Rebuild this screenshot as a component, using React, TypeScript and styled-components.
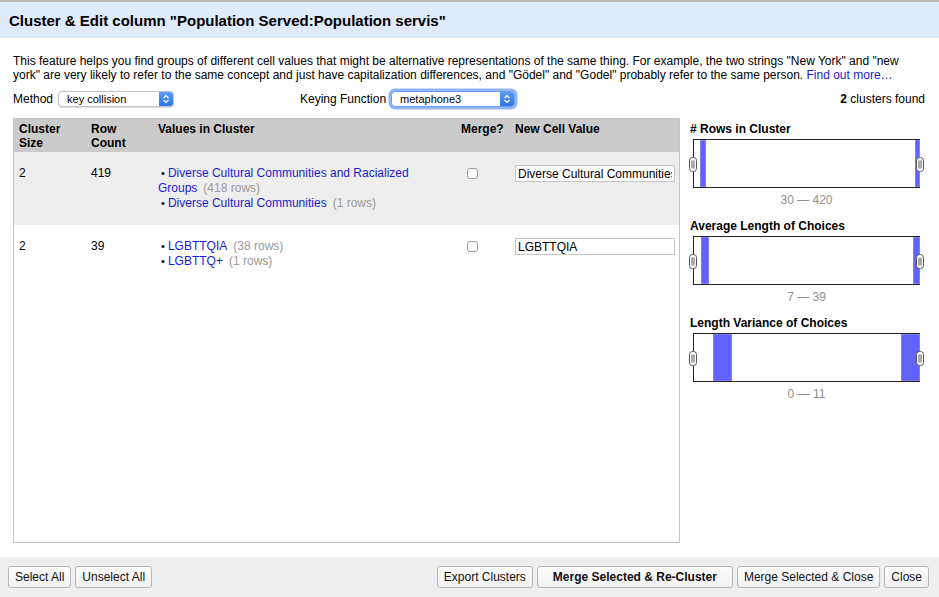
import React from 'react'
import styled, { createGlobalStyle } from 'styled-components'

type Choice = { value: string; rows: number }
type Cluster = { size: number; count: number; choices: Choice[]; newValue: string }
type Bar = { left: number; width: number }
type Histogram = { title: string; range: string; bars: Bar[] }

const clusters: Cluster[] = [
    {
        size: 2,
        count: 419,
        choices: [
            { value: 'Diverse Cultural Communities and Racialized Groups', rows: 418 },
            { value: 'Diverse Cultural Communities', rows: 1 },
        ],
        newValue: 'Diverse Cultural Communities and Racialized Groups',
    },
    {
        size: 2,
        count: 39,
        choices: [
            { value: 'LGBTTQIA', rows: 38 },
            { value: 'LGBTTQ+', rows: 1 },
        ],
        newValue: 'LGBTTQIA',
    },
]

const histograms: Histogram[] = [
    {
        title: '# Rows in Cluster',
        range: '30 \u2014 420',
        bars: [
            { left: 6, width: 6 },
            { left: 221, width: 5 },
        ],
    },
    {
        title: 'Average Length of Choices',
        range: '7 \u2014 39',
        bars: [
            { left: 7, width: 8 },
            { left: 219, width: 7 },
        ],
    },
    {
        title: 'Length Variance of Choices',
        range: '0 \u2014 11',
        bars: [
            { left: 19, width: 19 },
            { left: 207, width: 19 },
        ],
    },
]

const GlobalStyle = createGlobalStyle`
    html, body {
        margin: 0;
        padding: 0;
    }
    body {
        font-family: 'Liberation Sans', Arial, sans-serif;
        font-size: 12px;
        color: #000;
        background: #fff;
    }
`

const Stepper = () => (
    <svg width="8" height="10" viewBox="0 0 8 10">
        <path d="M1.5 4 L4 1.5 L6.5 4" fill="none" stroke="#fff" strokeWidth="1.2" />
        <path d="M1.5 6 L4 8.5 L6.5 6" fill="none" stroke="#fff" strokeWidth="1.2" />
    </svg>
)

const Handle = () => (
    <svg width="8" height="15" viewBox="0 0 8 15">
        <rect x="0.5" y="0.5" width="7" height="14" rx="3" fill="#fff" stroke="#555" />
        <line x1="3" y1="3.5" x2="3" y2="11.5" stroke="#555" />
        <line x1="5" y1="3.5" x2="5" y2="11.5" stroke="#555" />
    </svg>
)

const App = () => {
    return (
        <>
            <GlobalStyle />
            <Dialog>
                <Header>Cluster &amp; Edit column "Population Served:Population servis"</Header>
                <Body>
                    <Intro>
                        This feature helps you find groups of different cell values that might be
                        alternative representations of the same thing. For example, the two strings
                        "New York" and "new york" are very likely to refer to the same concept and
                        just have capitalization differences, and "Gödel" and "Godel" probably refer
                        to the same person. <Link>Find out more…</Link>
                    </Intro>
                    <Controls>
                        <Field>
                            <span>Method</span>
                            <Select width={116}>
                                <span>key collision</span>
                                <StepBtn>
                                    <Stepper />
                                </StepBtn>
                            </Select>
                        </Field>
                        <Field>
                            <span>Keying Function</span>
                            <Select width={124} focused>
                                <span>metaphone3</span>
                                <StepBtn>
                                    <Stepper />
                                </StepBtn>
                            </Select>
                        </Field>
                        <Found>
                            <b>2</b> clusters found
                        </Found>
                    </Controls>
                    <Main>
                        <TablePanel>
                            <HeadRow>
                                <HeadCell first narrow>Cluster Size</HeadCell>
                                <HeadCell narrow>Row Count</HeadCell>
                                <HeadCell>Values in Cluster</HeadCell>
                                <HeadCell>Merge?</HeadCell>
                                <HeadCell>New Cell Value</HeadCell>
                            </HeadRow>
                            {clusters.map((c, i) => (
                                <ClusterRow key={i} shaded={i % 2 === 0}>
                                    <Cell first>{c.size}</Cell>
                                    <Cell>{c.count}</Cell>
                                    <Values>
                                        {c.choices.map((ch, j) => (
                                            <Choice key={j}>
                                                <Bullet>• </Bullet>
                                                <Link>{ch.value}</Link>
                                                <RowCount>({ch.rows} rows)</RowCount>
                                            </Choice>
                                        ))}
                                    </Values>
                                    <Cell>
                                        <Check />
                                    </Cell>
                                    <Cell>
                                        <ValueInput defaultValue={c.newValue} />
                                    </Cell>
                                </ClusterRow>
                            ))}
                        </TablePanel>
                        <Facets>
                            {histograms.map((h, i) => (
                                <Facet key={i}>
                                    <FacetTitle>{h.title}</FacetTitle>
                                    <HistBox>
                                        {h.bars.map((b, j) => (
                                            <HistBar key={j} style={{ left: b.left, width: b.width }} />
                                        ))}
                                        <HandleWrap side="left">
                                            <Handle />
                                        </HandleWrap>
                                        <HandleWrap side="right">
                                            <Handle />
                                        </HandleWrap>
                                    </HistBox>
                                    <Range>{h.range}</Range>
                                </Facet>
                            ))}
                        </Facets>
                    </Main>
                </Body>
                <Footer>
                    <ButtonGroup>
                        <Button>Select All</Button>
                        <Button>Unselect All</Button>
                    </ButtonGroup>
                    <ButtonGroup>
                        <Button>Export Clusters</Button>
                        <Button primary>Merge Selected &amp; Re-Cluster</Button>
                        <Button>Merge Selected &amp; Close</Button>
                        <Button>Close</Button>
                    </ButtonGroup>
                </Footer>
            </Dialog>
        </>
    )
}

export default App

const Dialog = styled.div`
    width: 939px;
    height: 597px;
    display: flex;
    flex-direction: column;
    border-top: 2px solid #b9b9b9;
    box-sizing: border-box;
    overflow: hidden;
`

const Header = styled.div`
    height: 36px;
    flex-shrink: 0;
    display: flex;
    align-items: center;
    padding-left: 9px;
    background: #dfeafc;
    font-size: 15px;
    font-weight: bold;
`

const Body = styled.div`
    flex: 1;
    display: flex;
    flex-direction: column;
    padding: 16px 14px 14px 13px;
    min-height: 0;
`

const Intro = styled.p`
    margin: 0;
    line-height: 14px;
`

const Link = styled.a`
    color: #1b1bd3;
    cursor: pointer;
`

const Controls = styled.div`
    display: grid;
    grid-template-columns: 287px auto 1fr;
    align-items: center;
    height: 16px;
    margin-top: 9px;
`

const Field = styled.div`
    display: flex;
    align-items: center;
    gap: 5px;
`

const Select = styled.div<{ width: number; focused?: boolean }>`
    width: ${({ width }) => width}px;
    height: 16px;
    box-sizing: border-box;
    display: flex;
    align-items: center;
    justify-content: space-between;
    border: 1px solid ${({ focused }) => (focused ? '#6a9ff0' : '#c4c4c4')};
    border-radius: 4px;
    background: #fff;
    font-size: 11px;
    padding-left: 8px;
    overflow: hidden;
    box-shadow: ${({ focused }) => (focused ? '0 0 0 2.5px #8fb6f5' : '0 0.5px 1px rgba(0,0,0,0.15)')};
`

const StepBtn = styled.span`
    width: 14px;
    height: 100%;
    display: flex;
    align-items: center;
    justify-content: center;
    background: linear-gradient(#5a9cf5, #2f74e6);
`

const Found = styled.div`
    text-align: right;
`

const Main = styled.div`
    flex: 1;
    display: flex;
    gap: 10px;
    margin-top: 11px;
    min-height: 0;
`

const TablePanel = styled.div`
    width: 667px;
    box-sizing: border-box;
    border: 1px solid #c6c6c6;
    background: #fff;
`

const HeadRow = styled.div`
    display: grid;
    grid-template-columns: 77px 67px 303px 54px 1fr;
    background: #cbcbcb;
    padding: 3px 0;
    height: 33px;
    box-sizing: border-box;
`

const HeadCell = styled.div<{ first?: boolean; narrow?: boolean }>`
    font-weight: bold;
    line-height: 14px;
    padding-left: ${({ first }) => (first ? 5 : 0)}px;
    max-width: ${({ narrow }) => (narrow ? '50px' : 'none')};
`

const ClusterRow = styled.div<{ shaded?: boolean }>`
    display: grid;
    grid-template-columns: 77px 67px 303px 54px 1fr;
    align-items: start;
    padding: 14px 0 14px;
    background: ${({ shaded }) => (shaded ? '#eeeeee' : '#fff')};
    line-height: 15px;
`

const Cell = styled.div<{ first?: boolean }>`
    padding-left: ${({ first }) => (first ? 5 : 0)}px;
    display: flex;
    align-items: center;
    height: 15px;
`

const Values = styled.div`
    padding-right: 26px;
`

const Choice = styled.div`
    line-height: 15px;
`

const Bullet = styled.span`
    padding-left: 3px;
    font-size: 11px;
`

const RowCount = styled.span`
    color: #9a9a9a;
    margin-left: 6px;
`

const Check = styled.span`
    display: inline-block;
    width: 11px;
    height: 11px;
    box-sizing: border-box;
    margin-left: 6px;
    border: 1px solid #9d9d9d;
    border-radius: 3px;
    background: #fff;
`

const ValueInput = styled.input`
    width: 160px;
    height: 17px;
    flex-shrink: 0;
    box-sizing: border-box;
    border: 1px solid #c4c4c4;
    padding: 0 2px;
    font-family: 'Liberation Sans', Arial, sans-serif;
    font-size: 12px;
    color: #000;
    outline: none;
`

const Facets = styled.div`
    width: 235px;
    display: flex;
    flex-direction: column;
    padding-top: 4px;
`

const Facet = styled.div`
    display: flex;
    flex-direction: column;
    margin-bottom: 12px;
`

const FacetTitle = styled.div`
    font-weight: bold;
    line-height: 14px;
`

const HistBox = styled.div`
    position: relative;
    margin: 3px 0 0 3px;
    width: 227px;
    height: 49px;
    box-sizing: border-box;
    border: 1px solid #222;
    background: #fff;
`

const HistBar = styled.div`
    position: absolute;
    top: 0;
    bottom: 0;
    background: #6262ff;
    box-shadow: inset 0 0 0 0.5px #9a9aff;
`

const HandleWrap = styled.div<{ side: 'left' | 'right' }>`
    position: absolute;
    top: 17px;
    ${({ side }) => (side === 'left' ? 'left: -5px;' : 'right: -5px;')}
    width: 8px;
    height: 15px;
    line-height: 0;
`

const Range = styled.div`
    margin-top: 5px;
    padding-left: 3px;
    width: 227px;
    text-align: center;
    color: #8e8e8e;
    line-height: 14px;
`

const Footer = styled.div`
    height: 40px;
    flex-shrink: 0;
    display: flex;
    align-items: center;
    justify-content: space-between;
    padding: 0 10px 0 8px;
    background: #efefef;
`

const ButtonGroup = styled.div`
    display: flex;
    gap: 4px;
`

const Button = styled.button<{ primary?: boolean }>`
    height: 22px;
    padding: 0 ${({ primary }) => (primary ? 15 : 6)}px;
    border: 1px solid #b8b8b8;
    border-radius: 3px;
    background: linear-gradient(#fdfdfd, #f1f1f1);
    font-family: 'Liberation Sans', Arial, sans-serif;
    font-size: 12px;
    font-weight: ${({ primary }) => (primary ? 'bold' : 'normal')};
    color: #111;
    cursor: pointer;
`
